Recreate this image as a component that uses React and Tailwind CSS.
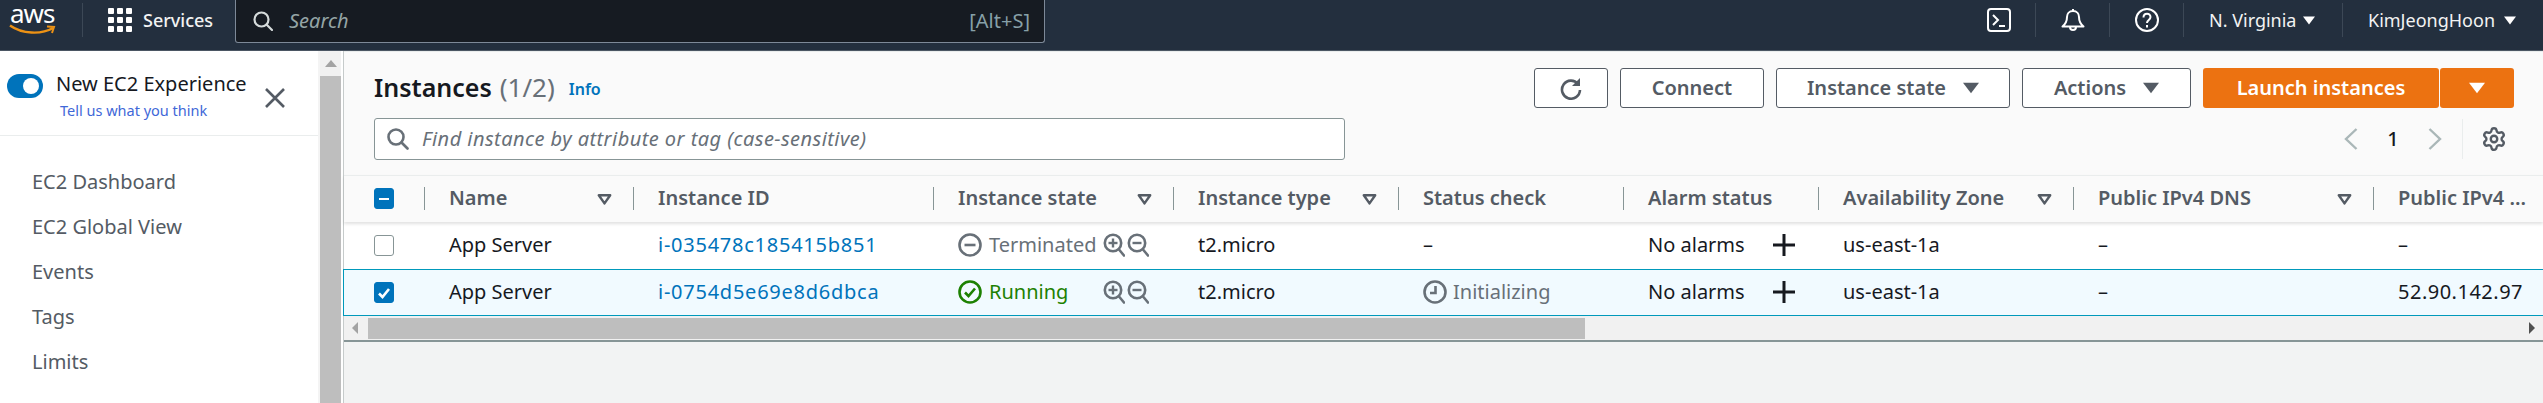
import { Settings } from 'lucide-react';

const GRID = 'grid grid-cols-[80px_209px_300px_240px_225px_225px_195px_255px_300px_170px]';

const Caret = ({ className }) => (
  <svg viewBox="0 0 12 8" className={className} fill="currentColor">
    <path d="M0 0h12L6 8z" />
  </svg>
);

const FilterCaret = () => (
  <svg viewBox="0 0 15 11" className="w-[15px] h-[11px] text-[#545b64]" fill="none" stroke="currentColor" strokeWidth="2.4">
    <path d="M1.8 1.2h11.4L7.5 9.4z" strokeLinejoin="round" />
  </svg>
);

const NavSep = ({ className }) => <div className={`w-px h-[34px] bg-[#3c4856] ${className}`} />;

const Magnifier = ({ minus }) => (
  <svg viewBox="0 0 22 24" className="w-[22px] h-[24px] text-[#687078]" fill="none" stroke="currentColor" strokeWidth="2.6">
    <circle cx="10" cy="10" r="8.2" />
    <path d="M16 16.5l5 6" strokeLinecap="round" />
    <path d="M5.5 10h9" strokeWidth="2.4" />
    {!minus && <path d="M10 5.5v9" strokeWidth="2.4" />}
  </svg>
);

const Plus = () => (
  <svg viewBox="0 0 22 22" className="w-[22px] h-[22px] ml-[28px] text-[#16191f]" stroke="currentColor" strokeWidth="3">
    <path d="M0 11h22M11 0v22" />
  </svg>
);

const Box = ({ state }) => (
  <div className={`w-[20px] h-[21px] rounded-[3px] flex items-center justify-center border ${state === 'off' ? 'bg-white border-[#879596]' : 'bg-[#0073bb] border-[#0073bb]'}`}>
    {state === 'on' && (
      <svg viewBox="0 0 14 14" className="w-[14px] h-[14px]" fill="none" stroke="white" strokeWidth="2.6">
        <path d="M2 7.5l3.5 3.5L12 3" />
      </svg>
    )}
    {state === 'dash' && <div className="w-[10px] h-[2px] bg-white" />}
  </div>
);

const Head = ({ label, filter }) => (
  <div className="relative pl-[25px] pr-[21px] flex items-center justify-between before:absolute before:left-0 before:top-[11px] before:h-[23px] before:w-px before:bg-[#879596]">
    <span className="font-semibold text-[#545b64] whitespace-nowrap pb-[2px]">{label}</span>
    {filter && <FilterCaret />}
  </div>
);

const Cell = ({ children, className = '' }) => (
  <div className={`pl-[25px] flex items-center whitespace-nowrap pb-[2px] ${className}`}>{children}</div>
);

const Row = ({ selected, id, state, check, ip }) => (
  <div className={`${GRID} h-[47px] text-[#16191f] ${selected ? 'bg-[#f1faff] border-y border-[#0099bb] shadow-[-1px_0_0_#0099bb]' : 'bg-white'}`}>
    <div className="pl-[30px] flex items-center"><Box state={selected ? 'on' : 'off'} /></div>
    <Cell>App Server</Cell>
    <Cell className="text-[#0073bb] tracking-[0.75px]">{id}</Cell>
    <Cell>
      <div className="w-[145px] flex items-center gap-[7px]">
        {state === 'Running' ? (
          <svg viewBox="0 0 24 24" className="w-[24px] h-[24px] text-[#1d8102]" fill="none" stroke="currentColor" strokeWidth="2.6">
            <circle cx="12" cy="12" r="10.5" />
            <path d="M7 12.5l3.5 3.5L17 8.5" />
          </svg>
        ) : (
          <svg viewBox="0 0 24 24" className="w-[24px] h-[24px] text-[#687078]" fill="none" stroke="currentColor" strokeWidth="2.6">
            <circle cx="12" cy="12" r="10.5" />
            <path d="M6.5 12h11" />
          </svg>
        )}
        <span className={state === 'Running' ? 'text-[#1d8102]' : 'text-[#687078]'}>{state}</span>
      </div>
      <div className="flex gap-[2px]"><Magnifier /><Magnifier minus /></div>
    </Cell>
    <Cell>t2.micro</Cell>
    <Cell className="gap-[6px]">
      {check ? (
        <>
          <svg viewBox="0 0 24 24" className="w-[24px] h-[24px] text-[#687078]" fill="none" stroke="currentColor" strokeWidth="2.6">
            <circle cx="12" cy="12" r="10.5" />
            <path d="M12.5 6v7H7" />
          </svg>
          <span className="text-[#687078]">{check}</span>
        </>
      ) : '–'}
    </Cell>
    <Cell>No alarms<Plus /></Cell>
    <Cell>us-east-1a</Cell>
    <Cell>–</Cell>
    <Cell className="tracking-[0.5px]">{ip}</Cell>
  </div>
);

const Button = ({ children, className }) => (
  <div className={`h-[40px] bg-white border border-[#545b64] rounded-[3px] flex items-center justify-center font-semibold text-[#545b64] ${className}`}>
    {children}
  </div>
);

export default function App() {
  return (
    <div className="h-[403px] w-[2543px] overflow-hidden bg-white text-[20px] leading-[24px] font-['Noto_Sans',sans-serif]">
      {/* top bar */}
      <div className="h-[51px] bg-[#232f3e] border-b border-[#4b5663] flex items-start text-white">
        <div className="w-[82px] h-[50px] pl-[10px] pt-[1px] relative">
          <div className="text-[26px] leading-[24px] tracking-[-1px] text-white">aws</div>
          <svg viewBox="0 0 48 12" className="absolute left-[9px] top-[24px] w-[48px] h-[12px]" fill="none" stroke="#ec9215" strokeWidth="2.4">
            <path d="M1 1.5C13 10 32 11 44 4" />
            <path d="M38 2.5l7 0.5-2 6" strokeWidth="2" />
          </svg>
        </div>
        <NavSep className="mt-[3px]" />
        <div className="w-[152px] h-[40px] pl-[25px] flex items-center gap-[11px]">
          <div className="grid grid-cols-3 gap-[3px]">
            {[...Array(9)].map((_, i) => <div key={i} className="w-[6px] h-[6px] bg-white rounded-[1px]" />)}
          </div>
          <span className="font-medium text-[18px] text-[#f2f3f3]">Services</span>
        </div>
        <div className="w-[810px] h-[43px] bg-[#161b22] border-l border-b border-r border-[#7d8998] rounded-b-[3px] flex items-center pl-[17px] pr-[14px]">
          <svg viewBox="0 0 20 20" className="w-[20px] h-[20px] text-[#d5dbdb]" fill="none" stroke="currentColor" strokeWidth="2.2">
            <circle cx="8.5" cy="8.5" r="7" />
            <path d="M13.5 13.5l5.5 5.5" strokeLinecap="round" />
          </svg>
          <span className="ml-[16px] italic text-[#95a5a6]">Search</span>
          <span className="ml-auto text-[#87a0a8]">[Alt+S]</span>
        </div>
        <svg viewBox="0 0 24 24" className="w-[24px] h-[24px] mt-[8px] ml-[942px]" fill="none" stroke="white" strokeWidth="2">
          <rect x="1" y="1" width="22" height="22" rx="3" />
          <path d="M6 7l5 5-5 5M12 18h6" />
        </svg>
        <NavSep className="mt-[3px] ml-[24px]" />
        <svg viewBox="0 0 24 24" className="w-[24px] h-[24px] mt-[8px] ml-[25px]" fill="none" stroke="white" strokeWidth="2">
          <path d="M12 3c-4 0-6 3-6 6 0 5-1.5 7-4.5 9.5h21C19.500 16 18 14 18 9c0-3-2-6-6-6zM12 3V1M9 19a3 3 0 0 0 6 0" strokeLinejoin="round" />
        </svg>
        <NavSep className="mt-[3px] ml-[24px]" />
        <svg viewBox="0 0 24 24" className="w-[24px] h-[24px] mt-[8px] ml-[25px]" fill="none" stroke="white" strokeWidth="2">
          <circle cx="12" cy="12" r="11" />
          <path d="M8.500 9.500c0-5 7-5 7-.5 0 3-3.500 3-3.500 6M12 17v2.500" />
        </svg>
        <NavSep className="mt-[3px] ml-[24px]" />
        <div className="h-[40px] w-[131px] pl-[25px] flex items-center text-[18px]">
          <span className="text-[#f2f3f3] w-[94px] shrink-0">N. Virginia</span>
          <Caret className="w-[12px] h-[9px]" />
        </div>
        <NavSep className="mt-[3px] ml-[27px]" />
        <div className="h-[40px] ml-[25px] flex items-center text-[18px]">
          <span className="text-[#f2f3f3]">KimJeongHoon</span>
          <Caret className="w-[12px] h-[9px] ml-[9px]" />
        </div>
      </div>

      <div className="flex h-[352px]">
        {/* side nav */}
        <div className="w-[318px]">
          <div className="h-[85px] border-b border-[#eaeded] relative">
            <div className="absolute left-[7px] top-[23px] w-[36px] h-[24px] rounded-full bg-[#0073bb] flex items-center justify-end pr-[4px]">
              <div className="w-[16px] h-[16px] rounded-full bg-white" />
            </div>
            <div className="absolute left-[56px] top-[21px] text-[#16191f] whitespace-nowrap">New EC2 Experience</div>
            <div className="absolute left-[60px] top-[49px] text-[14.5px] leading-[20px] text-[#3f68d8] whitespace-nowrap">Tell us what you think</div>
            <svg viewBox="0 0 20 20" className="absolute left-[265px] top-[37px] w-[20px] h-[20px] text-[#545b64]" stroke="currentColor" strokeWidth="2.6">
              <path d="M1 1l18 18M19 1L1 19" />
            </svg>
          </div>
          <div className="pl-[32px] pt-[34px] flex flex-col gap-[21px] text-[#545b64]">
            <div>EC2 Dashboard</div>
            <div>EC2 Global View</div>
            <div>Events</div>
            <div>Tags</div>
            <div>Limits</div>
          </div>
        </div>

        {/* side scrollbar */}
        <div className="w-[25px] flex">
          <div className="w-[2px] bg-[#f4f4f4]" />
          <div className="w-[21px] bg-[#f1f1f1] flex flex-col items-center">
            <div className="h-[25px] flex items-center">
              <div className="w-0 h-0 border-x-[6px] border-x-transparent border-b-[7px] border-b-[#a3a3a3]" />
            </div>
            <div className="w-full flex-1 bg-[#bebebe]" />
          </div>
        </div>

        {/* main */}
        <div className="flex-1 bg-[#f2f3f3] border-l border-[#c6cbcb]">
          <div className="bg-[#fafafa] border-t border-[#eaeded] pt-[16px]">
            <div className="flex items-start pl-[30px] pr-[29px]">
              <div className="h-[40px] flex items-center pb-[2px]">
                <span className="text-[25px] font-semibold text-[#16191f]">Instances</span>
                <span className="text-[26px] text-[#687078] ml-[8px]">(1/2)</span>
                <span className="text-[16px] font-semibold text-[#0073bb] ml-[14px] mt-[3px]">Info</span>
              </div>
              <div className="ml-auto flex gap-[12px]">
                <Button className="w-[74px]">
                  <svg viewBox="0 0 24 24" className="w-[24px] h-[24px]" fill="none" stroke="currentColor" strokeWidth="2.6">
                    <path d="M19 8a9 9 0 1 0 2 6" />
                    <path d="M21 2v8h-8z" fill="currentColor" stroke="none" />
                  </svg>
                </Button>
                <Button className="w-[144px]">Connect</Button>
                <Button className="w-[234px] gap-[17px]">Instance state<Caret className="w-[16px] h-[12px]" /></Button>
                <Button className="w-[169px] gap-[17px]">Actions<Caret className="w-[16px] h-[12px]" /></Button>
                <div className="flex gap-px font-semibold text-white">
                  <div className="w-[236px] h-[40px] bg-[#ec7211] rounded-[3px] flex items-center justify-center">Launch instances</div>
                  <div className="w-[74px] h-[40px] bg-[#ec7211] rounded-[3px] flex items-center justify-center">
                    <Caret className="w-[16px] h-[12px]" />
                  </div>
                </div>
              </div>
            </div>

            <div className="flex items-center mt-[10px] pl-[30px] pr-[36px] pb-[15px]">
              <div className="w-[971px] h-[42px] bg-white border border-[#879596] rounded-[3px] flex items-center pl-[12px] gap-[13px]">
                <svg viewBox="0 0 22 22" className="w-[22px] h-[22px] text-[#687078]" fill="none" stroke="currentColor" strokeWidth="2.6">
                  <circle cx="9" cy="9" r="7.5" />
                  <path d="M14.500 14.500l6 6" strokeLinecap="round" />
                </svg>
                <span className="italic text-[#687078] tracking-[0.45px]">Find instance by attribute or tag (case-sensitive)</span>
              </div>
              <div className="ml-auto flex items-center h-[42px]">
                <svg viewBox="0 0 14 24" className="w-[14px] h-[24px] text-[#aab7b8]" fill="none" stroke="currentColor" strokeWidth="2.4">
                  <path d="M12.500 2L2 12l10.500 10" />
                </svg>
                <span className="w-[70px] text-center text-[#16191f] font-medium">1</span>
                <svg viewBox="0 0 14 24" className="w-[14px] h-[24px] text-[#aab7b8]" fill="none" stroke="currentColor" strokeWidth="2.4">
                  <path d="M1.500 2L12 12 1.500 22" />
                </svg>
                <div className="w-px h-[40px] bg-[#eaeded] ml-[20px]" />
                <Settings className="w-[26px] h-[26px] ml-[18px] text-[#545b64]" strokeWidth={2.2} />
              </div>
            </div>
          </div>

          {/* table */}
          <div className={`${GRID} h-[47px] bg-[#fafafa] border-t border-[#eaeded] shadow-[0_2px_3px_rgba(0,0,0,0.12)] relative`}>
            <div className="pl-[30px] pt-[12px]"><Box state="dash" /></div>
            <Head label="Name" filter />
            <Head label="Instance ID" />
            <Head label="Instance state" filter />
            <Head label="Instance type" filter />
            <Head label="Status check" />
            <Head label="Alarm status" />
            <Head label="Availability Zone" filter />
            <Head label="Public IPv4 DNS" filter />
            <Head label="Public IPv4 ..." />
          </div>
          <Row id="i-035478c185415b851" state="Terminated" ip="–" />
          <Row selected id="i-0754d5e69e8d6dbca" state="Running" check="Initializing" ip="52.90.142.97" />

          {/* table scrollbar */}
          <div className="h-[26px] bg-[#f1f1f1] border-b-2 border-[#879596] flex items-center">
            <div className="ml-[8px] w-0 h-0 border-y-[6px] border-y-transparent border-r-[6px] border-r-[#a3a3a3]" />
            <div className="ml-[10px] w-[1217px] h-[21px] bg-[#bebebe]" />
            <div className="ml-auto mr-[8px] w-0 h-0 border-y-[6px] border-y-transparent border-l-[6px] border-l-[#505050]" />
          </div>
        </div>
      </div>
    </div>
  );
}
